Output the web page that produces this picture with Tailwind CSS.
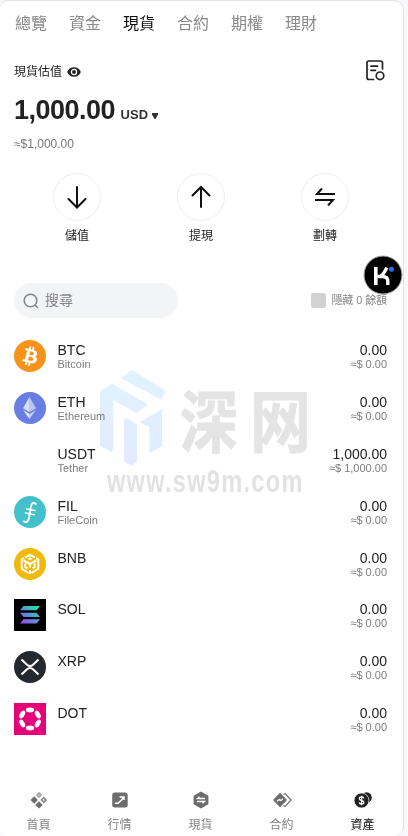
<!DOCTYPE html>
<html lang="zh-Hant">
<head>
<meta charset="utf-8">
<title>資產</title>
<script src="https://cdn.jsdelivr.net/npm/@tailwindcss/browser@4"></script>
</head>
<body class="bg-[#f8f8fc] w-[408px] h-[836px] overflow-hidden font-['Liberation_Sans','Noto_Sans_CJK_TC',sans-serif] text-[#222]">
<main class="relative w-[404px] h-[836px] bg-white border-t border-r border-[#e2e2e2] rounded-r-[10px] rounded-l-[8px] overflow-hidden flex flex-col">
  <nav class="flex gap-[22px] pl-[15px] pt-[11px] text-[16px] leading-[24px] text-[#8a8a8a]">
    <span>總覽</span><span>資金</span><span class="text-[#111]">現貨</span><span>合約</span><span>期權</span><span>理財</span>
  </nav>

  <section class="pl-[14px] pr-[18px] pt-[22px] h-[137px]">
    <div class="flex items-center justify-between h-[24px]">
      <div class="flex items-center gap-[5px] text-[12px] leading-[18px] pt-[3px]">
        <span>現貨估值</span>
        <svg class="w-[14px] h-[12px]" viewBox="0 0 14 12"><path d="M7 1.200C3.800 1.200 1.200 3.200.2 6c1 2.800 3.600 4.800 6.800 4.800s5.800-2 6.800-4.800C12.800 3.200 10.200 1.200 7 1.200z" fill="#222"/><circle cx="7" cy="6" r="2.600" fill="#222" stroke="#fff" stroke-width="1.300"/></svg>
      </div>
      <svg class="w-[20px] h-[22px]" viewBox="0 0 20 22" fill="none" stroke="#222" stroke-width="1.700" stroke-linecap="round"><path d="M8.500 20.500H4Q2 20.500 2 18.500V4Q2 2 4 2H15.500Q17.500 2 17.500 4V10"/><path d="M6 7.200H12.500M6 11.300H10.500"/><circle cx="15" cy="16.800" r="3.800"/></svg>
    </div>
    <div class="flex items-baseline mt-[12px] leading-[32px]">
      <span class="text-[27px] font-bold tracking-[-0.500px] w-[106.500px] whitespace-nowrap">1,000.00</span>
      <span class="text-[13px] font-bold tracking-[0.100px] text-[#333] w-[29px]">USD</span>
      <svg class="w-[6px] h-[6px] self-center ml-[2px] mt-[7px]" viewBox="0 0 6 6"><path d="M0 0H6V1.500L3.500 6H2.500L0 1.500z" fill="#333"/></svg>
    </div>
    <div class="mt-[7px] text-[12px] leading-[18px] text-[#777]"><span class="block -mt-[3px]">≈$1,000.00</span></div>
  </section>

  <section class="grid grid-cols-[124px_124px_124px] pl-[15px] h-[110px] text-center text-[12px] leading-[18px]">
    <div class="flex flex-col items-center">
      <span class="size-[48px] border border-[#eceef0] rounded-full grid place-items-center"><svg class="size-[24px]" viewBox="0 0 24 24" fill="none" stroke="#111" stroke-width="2" stroke-linecap="round"><path d="M12 2V22M3.500 14L12 22.500L20.500 14"/></svg></span>
      <span class="mt-[6px]">儲值</span>
    </div>
    <div class="flex flex-col items-center">
      <span class="size-[48px] border border-[#eceef0] rounded-full grid place-items-center"><svg class="size-[24px]" viewBox="0 0 24 24" fill="none" stroke="#111" stroke-width="2" stroke-linecap="round"><path d="M12 22V2.500M3.500 10.500L12 2L20.500 10.500"/></svg></span>
      <span class="mt-[6px]">提現</span>
    </div>
    <div class="flex flex-col items-center">
      <span class="size-[48px] border border-[#eceef0] rounded-full grid place-items-center"><svg class="size-[24px]" viewBox="0 0 24 24" fill="none" stroke="#111" stroke-width="2"><path d="M22 9H4L9 3.500M2 15H20L15 20.500"/></svg></span>
      <span class="mt-[6px]">劃轉</span>
    </div>
  </section>

  <section class="flex items-center justify-between pl-[14px] pr-[16px] h-[35px]">
    <label class="w-[164px] h-[35px] rounded-full bg-[#f3f4f6] flex items-center pl-[9px] gap-[6px] text-[14px] leading-[20px] text-[#858585]">
      <svg class="size-[16px]" viewBox="0 0 16 16" fill="none" stroke="#858585" stroke-width="1.600"><circle cx="7.500" cy="7.500" r="6.300"/><path d="M12 12L15 15"/></svg>
      <span class="-mt-[2px]">搜尋</span>
    </label>
    <div class="flex items-center gap-[5px] text-[11px] text-[#858585]"><i class="size-[15px] rounded-[2px] bg-[#d2d2d2]"></i><span class="whitespace-nowrap tracking-[-0.100px]">隱藏 0 餘額</span></div>
  </section>

  <ul class="flex flex-col pl-[14px] pr-[16px] pt-[22.400px]">
    <li class="flex h-[51.800px]">
      <svg class="size-[32px] shrink-0" viewBox="0 0 32 32"><circle cx="16" cy="16" r="16" fill="#f7931a"/><path fill="#fff" d="M23.189 14.020c.314-2.096-1.283-3.223-3.465-3.975l.708-2.840-1.728-.43-.69 2.765c-.454-.114-.92-.22-1.385-.326l.695-2.783L15.596 6l-.708 2.839c-.376-.086-.746-.17-1.104-.26l.002-.009-2.384-.595-.46 1.846s1.283.294 1.256.312c.7.175.826.638.805 1.006l-.806 3.235c.048.012.11.030.18.057l-.183-.045-1.130 4.532c-.086.212-.303.531-.793.410.018.025-1.256-.313-1.256-.313l-.858 1.978 2.250.561c.418.105.828.215 1.231.318l-.715 2.872 1.727.43.708-2.840c.472.127.930.245 1.378.357l-.706 2.828 1.728.43.715-2.866c2.948.558 5.164.333 6.097-2.333.752-2.146-.037-3.385-1.588-4.192 1.130-.26 1.980-1.003 2.207-2.538zm-3.950 5.538c-.533 2.147-4.148.986-5.320.695l.950-3.805c1.172.293 4.929.872 4.370 3.110zm.535-5.569c-.487 1.953-3.495.960-4.470.717l.860-3.450c.975.243 4.118.696 3.610 2.733z"/></svg>
      <div class="ml-[11.500px] mt-[2px]"><p class="text-[14px] leading-[17px]">BTC</p><p class="text-[11px] leading-[11px] text-[#7d7d7d]">Bitcoin</p></div>
      <div class="ml-auto mt-[2px] text-right"><p class="text-[14px] leading-[17px]">0.00</p><p class="text-[11px] leading-[11px] text-[#7d7d7d]">≈$ 0.00</p></div>
    </li>
    <li class="flex h-[51.800px]">
      <svg class="size-[32px] shrink-0" viewBox="0 0 32 32"><circle cx="16" cy="16" r="16" fill="#687ee3"/><g fill="#fff"><path opacity=".75" d="M15.500 5L9 16.200l6.500 4z"/><path opacity=".55" d="M15.500 5L22 16.200l-6.500 4z"/><path opacity=".85" d="M9 18l6.500 9v-5z"/><path opacity=".6" d="M22 18l-6.500 9v-5z"/></g></svg>
      <div class="ml-[11.500px] mt-[2px]"><p class="text-[14px] leading-[17px]">ETH</p><p class="text-[11px] leading-[11px] text-[#7d7d7d]">Ethereum</p></div>
      <div class="ml-auto mt-[2px] text-right"><p class="text-[14px] leading-[17px]">0.00</p><p class="text-[11px] leading-[11px] text-[#7d7d7d]">≈$ 0.00</p></div>
    </li>
    <li class="flex h-[51.800px]">
      <span class="size-[32px] shrink-0"></span>
      <div class="ml-[11.500px] mt-[2px]"><p class="text-[14px] leading-[17px]">USDT</p><p class="text-[11px] leading-[11px] text-[#7d7d7d]">Tether</p></div>
      <div class="ml-auto mt-[2px] text-right"><p class="text-[14px] leading-[17px]">1,000.00</p><p class="text-[11px] leading-[11px] text-[#7d7d7d]">≈$ 1,000.00</p></div>
    </li>
    <li class="flex h-[51.800px]">
      <svg class="size-[32px] shrink-0" viewBox="0 0 32 32"><circle cx="16" cy="16" r="16" fill="#42c1ca"/><g fill="none" stroke="#fff" stroke-width="1.500" stroke-linecap="round"><path d="M21.800 8Q18.200 4.300 16.700 11.500L15.300 20.500Q14 28 9.800 25.500" stroke-width="1.900"/><path d="M12.500 13L21 14.600M11.500 17L20.300 18.700"/></g></svg>
      <div class="ml-[11.500px] mt-[2px]"><p class="text-[14px] leading-[17px]">FIL</p><p class="text-[11px] leading-[11px] text-[#7d7d7d]">FileCoin</p></div>
      <div class="ml-auto mt-[2px] text-right"><p class="text-[14px] leading-[17px]">0.00</p><p class="text-[11px] leading-[11px] text-[#7d7d7d]">≈$ 0.00</p></div>
    </li>
    <li class="flex h-[51.800px]">
      <svg class="size-[32px] shrink-0" viewBox="0 0 32 32"><circle cx="16" cy="16" r="16" fill="#f0b90b"/><g fill="none" stroke="#fff" stroke-width="2"><path d="M11 9.500L16 6.800L21 9.500M7.700 15V11.500L10 10.200M24.300 15V11.500L22 10.200M7.700 14V20.800L14.500 25M24.300 14V20.800L17.500 25"/><path d="M9.500 12.500L16 16L22.500 12.500M16 16V19.500M11.300 15.500V19L13.500 20.300M20.700 15.500V19L18.500 20.300M16 22V26"/></g><path d="M16 9.300l2.600 1.500L16 12.300l-2.600-1.500z" fill="#fff"/></svg>
      <div class="ml-[11.500px] mt-[2px]"><p class="text-[14px] leading-[17px]">BNB</p></div>
      <div class="ml-auto mt-[2px] text-right"><p class="text-[14px] leading-[17px]">0.00</p><p class="text-[11px] leading-[11px] text-[#7d7d7d]">≈$ 0.00</p></div>
    </li>
    <li class="flex h-[51.800px]">
      <svg class="size-[32px] shrink-0" viewBox="0 0 32 32"><defs><linearGradient id="sol" gradientUnits="userSpaceOnUse" x1="8" y1="25" x2="24" y2="7"><stop stop-color="#9945ff"/><stop offset=".5" stop-color="#5a92d6"/><stop offset="1" stop-color="#19f3a0"/></linearGradient></defs><path d="M0 0H32V32H0z"/><path fill="url(#sol)" d="M9.500 7H26L22.500 11.300H6zM6 13.700H22.500L26 18H9.500zM9.500 20.300H26L22.500 24.600H6z"/></svg>
      <div class="ml-[11.500px] mt-[2px]"><p class="text-[14px] leading-[17px]">SOL</p></div>
      <div class="ml-auto mt-[2px] text-right"><p class="text-[14px] leading-[17px]">0.00</p><p class="text-[11px] leading-[11px] text-[#7d7d7d]">≈$ 0.00</p></div>
    </li>
    <li class="flex h-[51.800px]">
      <svg class="size-[32px] shrink-0" viewBox="0 0 32 32"><circle cx="16" cy="16" r="16" fill="#23292f"/><path d="M7.500 8.500L13 13.700Q16 16.200 19 13.700L24.500 8.500M7.500 23.500L13 18.300Q16 15.800 19 18.300L24.500 23.500" fill="none" stroke="#fff" stroke-width="2"/></svg>
      <div class="ml-[11.500px] mt-[2px]"><p class="text-[14px] leading-[17px]">XRP</p></div>
      <div class="ml-auto mt-[2px] text-right"><p class="text-[14px] leading-[17px]">0.00</p><p class="text-[11px] leading-[11px] text-[#7d7d7d]">≈$ 0.00</p></div>
    </li>
    <li class="flex h-[51.800px]">
      <svg class="size-[32px] shrink-0" viewBox="0 0 32 32"><path d="M0 0H32V32H0z" fill="#e6007a"/><g fill="#fff"><ellipse cx="16" cy="7" rx="4.200" ry="2.400"/><ellipse cx="16" cy="25" rx="4.200" ry="2.400"/><ellipse cx="8.200" cy="11.500" rx="4.200" ry="2.400" transform="rotate(-60 8.200 11.500)"/><ellipse cx="23.800" cy="20.500" rx="4.200" ry="2.400" transform="rotate(-60 23.800 20.500)"/><ellipse cx="8.200" cy="20.500" rx="4.200" ry="2.400" transform="rotate(60 8.200 20.500)"/><ellipse cx="23.800" cy="11.500" rx="4.200" ry="2.400" transform="rotate(60 23.800 11.500)"/></g></svg>
      <div class="ml-[11.500px] mt-[2px]"><p class="text-[14px] leading-[17px]">DOT</p></div>
      <div class="ml-auto mt-[2px] text-right"><p class="text-[14px] leading-[17px]">0.00</p><p class="text-[11px] leading-[11px] text-[#7d7d7d]">≈$ 0.00</p></div>
    </li>
  </ul>

  <footer class="mt-auto mb-[2px] ml-[-2px] grid grid-cols-[81px_81px_81px_81px_81px] text-[12px] leading-[18px] text-[#858585]">
    <div class="flex flex-col items-center gap-[7px]"><svg class="size-[18px]" viewBox="0 0 18 18" fill="#6d6d6d"><path d="M9 .8l3.200 3.200L9 7.200 5.800 4z" fill="#a5a5a5"/><path d="M4.200 5.300L7.900 9l-3.700 3.700L.5 9zM9 10.200l3.700 3.700L9 17.500l-3.700-3.600z"/><path d="M13.800 5.600L17.200 9l-3.400 3.400L10.400 9z" fill="#8c8c8c"/><path d="M13.800 8L14.800 9l-1 1L12.800 9zM9 3.200L9.800 4 9 4.800 8.200 4z" fill="#fff"/></svg><span>首頁</span></div>
    <div class="flex flex-col items-center gap-[7px]"><svg class="size-[18px]" viewBox="0 0 18 18"><rect x="1.200" y="1.500" width="15.500" height="15" rx="2.500" fill="#6d6d6d"/><path d="M4 12.300H7L10.500 9L13 6M8.500 6H13V9" fill="none" stroke="#fff" stroke-width="1.500"/></svg><span>行情</span></div>
    <div class="flex flex-col items-center gap-[7px]"><svg class="size-[18px]" viewBox="0 0 18 18"><path d="M9 1.500L15.500 5.200V12.800L9 16.500L2.500 12.800V5.200z" fill="#6d6d6d" stroke="#6d6d6d" stroke-width="1.800" stroke-linejoin="round"/><path d="M13 7.500H5.500L7.500 5.800M5 10.500H12.500L10.500 12.200" fill="none" stroke="#fff" stroke-width="1.300"/></svg><span>現貨</span></div>
    <div class="flex flex-col items-center gap-[7px]"><svg class="w-[20px] h-[18px]" viewBox="0 0 20 18"><path d="M11.500 3.500L13 2.500L19 9L13 15.500L11.500 14.500" fill="none" stroke="#777" stroke-width="1.300"/><path d="M8 2.700L14 9L8 15.300L2 9z" fill="#6d6d6d" stroke="#6d6d6d" stroke-width="1.500" stroke-linejoin="round"/><path d="M5 10.200L7.200 8.600L8.800 9.500L11 7.800" fill="none" stroke="#fff" stroke-width="1.300"/></svg><span>合約</span></div>
    <div class="flex flex-col items-center gap-[7px] text-[#111]"><svg class="size-[18px]" viewBox="0 0 18 18"><circle cx="12.500" cy="6.500" r="5.300" fill="#222"/><circle cx="7.500" cy="9.500" r="7.500" fill="#222" stroke="#fff" stroke-width=".7"/><path d="M9.800 7.300Q9.500 6 7.600 6Q5.400 6 5.400 7.700Q5.400 9.100 7.600 9.500Q9.900 9.900 9.900 11.500Q9.900 13 7.600 13Q5.500 13 5.200 11.500M7.600 4.700V14.300" fill="none" stroke="#fff" stroke-width="1.300"/></svg><span>資產</span></div>
  </footer>

  <svg class="absolute left-[96px] top-[365px] w-[216px] h-[132px] pointer-events-none mix-blend-multiply" viewBox="96 366 216 132">
    <defs><linearGradient id="mark" x1="0" y1="370" x2="0" y2="466" gradientUnits="userSpaceOnUse"><stop stop-color="#e0f3ff"/><stop offset="1" stop-color="#e3eaff"/></linearGradient></defs>
    <g fill="url(#mark)"><path d="M120.700 378.300L132 370L164 389.500Q166 391 164.500 393L162 400z"/><path d="M100 391.700L111.700 383.500L147.500 404.300L137 413.500L113.300 400V447L112 452L100 446z"/><path d="M124 420L126 418L137 424V461.500L131.700 466L124 461.500z"/><path d="M139.500 422L162 409V446L149.300 453.500V427z"/></g>
    <g fill="#e4e4e4" stroke="#e4e4e4" stroke-width=".8" class="font-['Noto_Sans_CJK_SC',sans-serif] font-bold"><text transform="translate(179.500 447) scale(.86 1)" font-size="68">深</text><text transform="translate(250 447) scale(.9 1)" font-size="68">网</text></g>
    <text transform="translate(107 491.500) scale(.76 1)" font-size="31" textLength="257" fill="#e2e2e2" class="font-bold font-['Liberation_Sans',sans-serif]">www.sw9m.com</text>
  </svg>

  <svg class="absolute left-[363px] top-[254px] size-[40px]" viewBox="0 0 40 40"><circle cx="20" cy="20" r="19" fill="#000" stroke="#aaa" stroke-width="1"/><path d="M12.800 12V30" fill="none" stroke="#fff" stroke-width="3.600"/><path d="M13 21.500H19Q24.800 21.500 24.800 26V30M17.500 21Q20.500 20 23.800 12.500" fill="none" stroke="#fff" stroke-width="3.400"/><circle cx="28.500" cy="14.200" r="2.500" fill="#2f6bff"/></svg>
</main>
</body>
</html>
